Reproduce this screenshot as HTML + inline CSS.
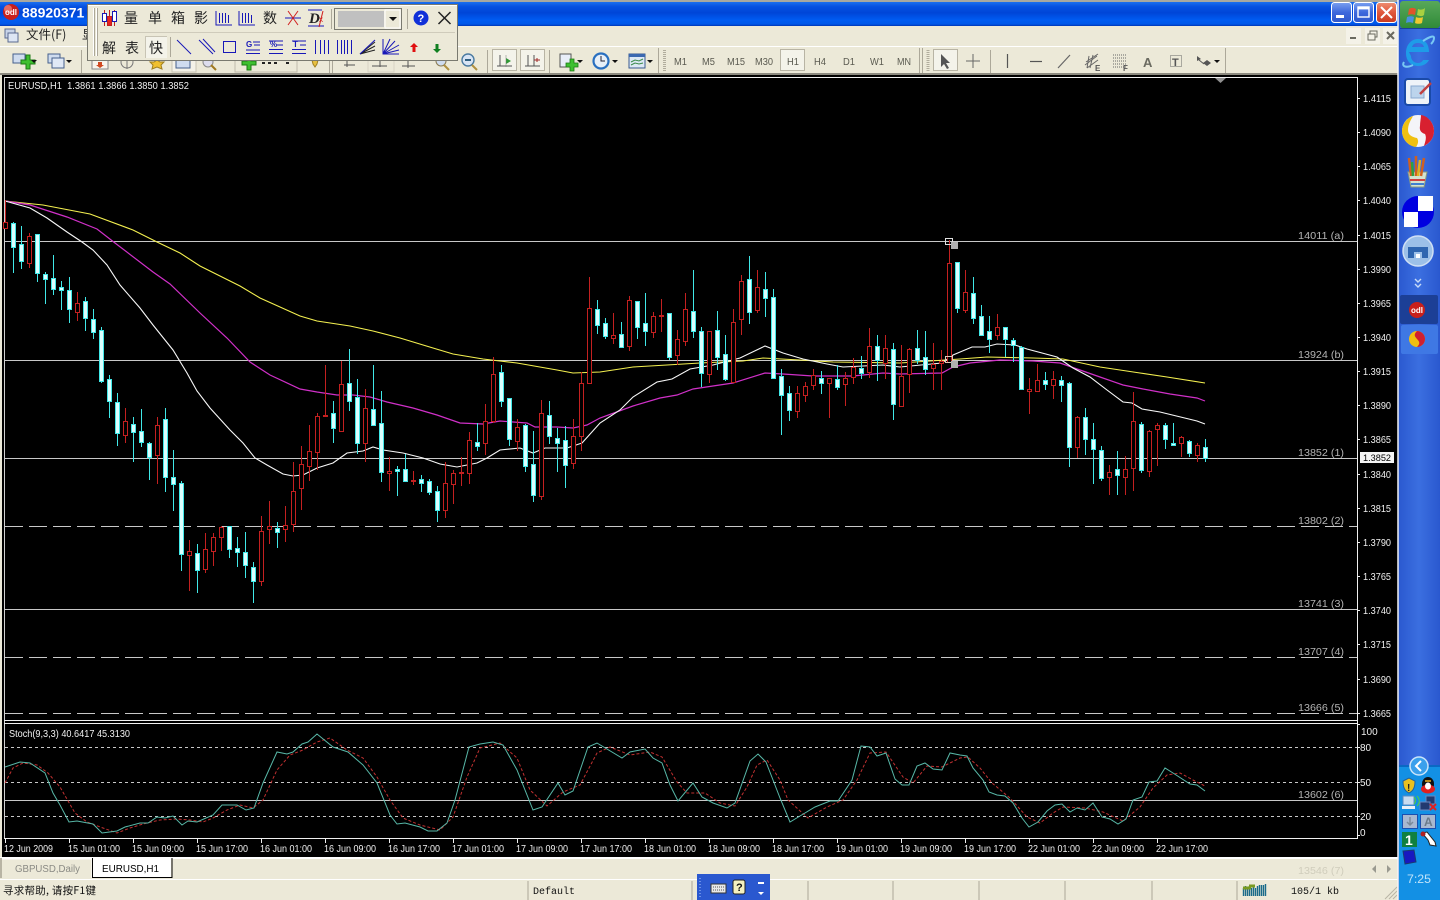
<!DOCTYPE html>
<html><head><meta charset="utf-8"><title>MT4</title>
<style>
html,body{margin:0;padding:0;background:#000;width:1440px;height:900px;overflow:hidden}
svg{display:block;position:absolute;left:0;top:0}
text{font-family:"Liberation Sans","WenQuanYi Zen Hei","Noto Sans CJK SC",sans-serif;font-size:10px}
.ax{fill:#f0f0f0}
.lb{fill:#b4b4b4}
.tb{fill:#5a5a50}
.cj{font-size:14px;fill:#222;font-family:"Noto Sans CJK SC","WenQuanYi Zen Hei",sans-serif}
.mono{font-family:"Liberation Mono",monospace;fill:#111}
</style></head><body>
<svg width="1440" height="900" viewBox="0 0 1440 900" xmlns="http://www.w3.org/2000/svg">
<defs>
<linearGradient id="tg" x1="0" y1="0" x2="0" y2="1"><stop offset="0" stop-color="#1b6fee"/><stop offset=".2" stop-color="#0650e0"/><stop offset=".45" stop-color="#0046d8"/><stop offset=".75" stop-color="#005cf2"/><stop offset=".92" stop-color="#0058e8"/><stop offset="1" stop-color="#0034b4"/></linearGradient>
<linearGradient id="bb" x1="0" y1="0" x2="0" y2="1"><stop offset="0" stop-color="#7aa0f0"/><stop offset=".5" stop-color="#3d68dc"/><stop offset="1" stop-color="#2f58cc"/></linearGradient>
<linearGradient id="rb" x1="0" y1="0" x2="0" y2="1"><stop offset="0" stop-color="#ee8e72"/><stop offset=".5" stop-color="#e0583c"/><stop offset="1" stop-color="#c83a20"/></linearGradient>
<linearGradient id="sb" x1="0" y1="0" x2="1" y2="0"><stop offset="0" stop-color="#2a58cf"/><stop offset=".5" stop-color="#3b6fe0"/><stop offset="1" stop-color="#2a58cf"/></linearGradient>
<linearGradient id="st" x1="0" y1="0" x2="0" y2="1"><stop offset="0" stop-color="#58a85a"/><stop offset="1" stop-color="#308a38"/></linearGradient>
</defs>

<!-- base -->
<rect width="1440" height="900" fill="#ece9d8"/>
<rect x="0" y="0" width="1398" height="2" fill="#a8a8a0"/>
<rect x="0" y="2" width="1398" height="24" fill="url(#tg)"/>
<rect x="0" y="46" width="1398" height="1" fill="#fff"/>
<rect x="0" y="73" width="1398" height="2" fill="#8c8a80"/>

<!-- title bar -->
<circle cx="11" cy="12" r="8" fill="#c8201c"/><circle cx="8" cy="9" r="4" fill="#e86a60"/>
<text x="5" y="15" style="font-size:8px;font-weight:bold;fill:#fff">odl</text>
<text x="22" y="17.5" style="font-size:14px;font-weight:bold;fill:#fff">88920371</text>

<rect x="1331.5" y="2.5" width="20" height="20" rx="3" fill="url(#bb)" stroke="#fff"/>
<rect x="1336" y="15" width="8" height="3" fill="#fff"/>
<rect x="1353.5" y="2.5" width="20" height="20" rx="3" fill="url(#bb)" stroke="#fff"/>
<rect x="1358" y="7" width="11" height="10" fill="none" stroke="#fff" stroke-width="1.4"/><rect x="1358" y="7" width="11" height="2.4" fill="#fff"/>
<rect x="1376.5" y="2.5" width="20" height="20" rx="3" fill="url(#rb)" stroke="#fff"/>
<path d="M1381 7l11 11M1392 7l-11 11" stroke="#fff" stroke-width="2"/>

<!-- menu bar -->
<rect x="5" y="29" width="10" height="9" fill="#c8d4e8" stroke="#5a6a90"/><rect x="8" y="33" width="10" height="9" fill="#dde6f4" stroke="#5a6a90"/>
<text x="26" y="39" style="font-size:12.500px;fill:#222;font-family:'Noto Sans CJK SC',sans-serif">文件(F)</text>
<text x="82" y="39" style="font-size:12.500px;fill:#222;font-family:'Noto Sans CJK SC',sans-serif">显</text>
<rect x="1346" y="28" width="15" height="16" fill="#f4f2e8"/><rect x="1350" y="37" width="6" height="2" fill="#6a6a60"/>
<rect x="1365" y="28" width="15" height="16" fill="#f4f2e8"/><rect x="1370" y="31" width="7" height="6" fill="none" stroke="#6a6a60"/><rect x="1368" y="34" width="7" height="6" fill="#f4f2e8" stroke="#6a6a60"/>
<rect x="1383" y="28" width="14" height="16" fill="#f4f2e8"/><path d="M1387 32l7 7M1394 32l-7 7" stroke="#6a6a60" stroke-width="2"/>

<!-- toolbar left -->
<rect x="13" y="54" width="12" height="9" fill="#cfdcef" stroke="#46608c"/>
<path d="M21 60h5v-5h4v5h5v4h-5v5h-4v-5h-5z" fill="#3ec030" stroke="#1c7a14"/>
<path d="M31 60h6l-3 3z" fill="#111"/>
<rect x="48" y="54" width="12" height="9" fill="#cfdcef" stroke="#46608c"/><rect x="52" y="58" width="12" height="10" fill="#dfe8f6" stroke="#46608c"/>
<path d="M66 60h6l-3 3z" fill="#111"/>
<rect x="81" y="50" width="1" height="23" fill="#aca899"/>
<rect x="92" y="60" width="16" height="9" fill="#f8f4ec" stroke="#888"/><path d="M98 62h4v3h2l-4 3-4-3h2z" fill="#d04820"/>
<circle cx="127" cy="62" r="6" fill="none" stroke="#777"/><path d="M127 60v9" stroke="#777"/>
<path d="M157 60l3 2h4l-3 3 1 4-5-2-5 2 1-4-3-3h4z" fill="#f0c030" stroke="#a08020"/>
<rect x="172" y="60" width="24" height="12" fill="#f4f2e8" stroke="#c8c4b4"/><rect x="176" y="60" width="14" height="8" fill="#cfdcef" stroke="#46608c"/>
<circle cx="208" cy="62" r="5" fill="#dde" stroke="#888"/><path d="M211 65l5 5" stroke="#a07820" stroke-width="2"/>
<rect x="235" y="60" width="62" height="12" fill="#ece9d8" stroke="#c0bcac"/>
<path d="M242 61h5v-3h4v3h5v4h-5v5h-4v-5h-5z" fill="#3ec030" stroke="#1c7a14"/>
<rect x="262" y="62" width="3" height="2" fill="#222"/><rect x="268" y="62" width="3" height="2" fill="#222"/><rect x="274" y="62" width="3" height="2" fill="#222"/><rect x="286" y="62" width="3" height="2" fill="#222"/>
<path d="M312 60l6 0-1 4-2 3-2-3z" fill="#e8c040" stroke="#a08020"/>
<rect x="329" y="50" width="1" height="23" fill="#aca899"/><rect x="332" y="50" width="1" height="23" fill="#aca899"/>
<path d="M347 61v6M352 65h-8M355 65h-11" stroke="#555"/><path d="M380 59v8M372 66h15" stroke="#555"/><rect x="368" y="60" width="26" height="12" fill="none" stroke="#d8d4c4"/><path d="M408 60v8M402 66h13" stroke="#555"/>
<circle cx="441" cy="61" r="5" fill="#cfdcef" stroke="#8a7a50"/><path d="M444 65l5 5" stroke="#b09040" stroke-width="2"/>
<circle cx="468" cy="60" r="6" fill="#d8e4f4" stroke="#4a7aa0" stroke-width="1.4"/><rect x="465" y="59" width="6" height="2" fill="#306080"/><path d="M472 65l5 5" stroke="#b09040" stroke-width="2"/>
<rect x="487" y="50" width="1" height="23" fill="#aca899"/>

<!-- toolbar mid -->
<rect x="492.5" y="49.5" width="24" height="21" fill="#f4f3ea" stroke="#b8b4a4"/>
<path d="M500 55v11M497 66h15" stroke="#555"/><path d="M506 58l5 3-5 3z" fill="#2f9a34"/><path d="M506 55v12" stroke="#777" stroke-width=".5"/>
<rect x="520.5" y="49.5" width="24" height="21" fill="#f4f3ea" stroke="#b8b4a4"/>
<path d="M528 55v11M534 55v11M525 66h15" stroke="#555"/><path d="M534 60h6M537 58v4" stroke="#a02828"/>
<rect x="549" y="50" width="1" height="23" fill="#aca899"/>
<rect x="560" y="54" width="11" height="13" fill="#e8eef8" stroke="#555"/>
<path d="M566 63h4v-4h4v4h4v4h-4v4h-4v-4h-4z" fill="#3ec030" stroke="#1c7a14" stroke-width=".8"/>
<path d="M577 60h6l-3 3z" fill="#111"/>
<circle cx="601" cy="61" r="7.5" fill="#e8f0f8" stroke="#2a70c0" stroke-width="2.2"/><path d="M601 56v5h4" stroke="#223" fill="none"/>
<path d="M612 60h6l-3 3z" fill="#111"/>
<rect x="629" y="54" width="16" height="14" fill="#dce8f4" stroke="#3a5a90"/><rect x="629" y="54" width="16" height="3" fill="#3a68b0"/><path d="M631 62l4-2 4 1 4-2M631 65l4-2 4 1 4-1" stroke="#3a8a4a" fill="none"/>
<path d="M647 60h6l-3 3z" fill="#111"/>
<rect x="658" y="48" width="1" height="25" fill="#aca899"/>
<path d="M664.5 50v22" stroke="#b0ac9c" stroke-dasharray="1 1" stroke-width="3"/>
<text x="674" y="65" class="tb" textLength="13" lengthAdjust="spacingAndGlyphs">M1</text>
<text x="702" y="65" class="tb" textLength="13" lengthAdjust="spacingAndGlyphs">M5</text>
<text x="727" y="65" class="tb" textLength="18" lengthAdjust="spacingAndGlyphs">M15</text>
<text x="755" y="65" class="tb" textLength="18" lengthAdjust="spacingAndGlyphs">M30</text>
<rect x="780.5" y="49.5" width="24" height="21" fill="#f4f3ea" stroke="#b8b4a4"/>
<text x="787" y="65" class="tb" textLength="12" lengthAdjust="spacingAndGlyphs">H1</text>
<text x="814" y="65" class="tb" textLength="12" lengthAdjust="spacingAndGlyphs">H4</text>
<text x="843" y="65" class="tb" textLength="12" lengthAdjust="spacingAndGlyphs">D1</text>
<text x="870" y="65" class="tb" textLength="14" lengthAdjust="spacingAndGlyphs">W1</text>
<text x="897" y="65" class="tb" textLength="14" lengthAdjust="spacingAndGlyphs">MN</text>
<rect x="919" y="48" width="1" height="25" fill="#aca899"/><rect x="922" y="48" width="1" height="25" fill="#aca899"/>
<path d="M928 50v22" stroke="#b0ac9c" stroke-dasharray="1 1" stroke-width="3"/>
<rect x="933.5" y="49.5" width="24" height="21" fill="#f4f3ea" stroke="#b8b4a4"/>
<path d="M941 54l0 13 3-3 3 5 2-1-3-5h4z" fill="#555"/>
<path d="M973 54v14M966 61h14" stroke="#666"/>
<rect x="990" y="50" width="1" height="23" fill="#aca899"/>
<path d="M1007.500 54v14" stroke="#555" stroke-width="1.2"/>
<path d="M1030 61.500h12" stroke="#555" stroke-width="1.2"/>
<path d="M1058 68l12-13" stroke="#666" stroke-width="1.2"/>
<path d="M1085 65l12-9M1086 62l12-8M1087 68l11-8M1089 56l-2 12M1093 55l-3 13" stroke="#666"/><text x="1095" y="71" style="font-size:8px;font-weight:bold;fill:#555">E</text>
<path d="M1113 55h13M1113 58h13M1113 61h13M1113 64h13M1113 67h13" stroke="#666" stroke-dasharray="1 1"/><text x="1123" y="71" style="font-size:8px;font-weight:bold;fill:#555">F</text>
<text x="1143" y="67" style="font-size:13px;font-weight:bold;fill:#6a6a60">A</text>
<rect x="1170.500" y="55.500" width="11" height="11" fill="none" stroke="#666" stroke-dasharray="1 1"/><text x="1172" y="66" style="font-size:11px;font-weight:bold;fill:#555">T</text>
<path d="M1197 56l4 3-4 2zM1207 60l4 3-4 3-4-3z" fill="#555"/><path d="M1199 60l5 4" stroke="#555"/>
<path d="M1214 60h6l-3 3z" fill="#111"/>
<rect x="1225" y="48" width="1" height="25" fill="#aca899"/>

<!-- chart base -->
<rect x="2" y="75" width="1396" height="784" fill="#000"/>
<rect x="0" y="75" width="2" height="784" fill="#ece9d8"/>
<rect x="4" y="77" width="1354" height="1" fill="#f0f0f0"/>
<rect x="4" y="77" width="1" height="762" fill="#d0d0d0"/>
<rect x="1357" y="77" width="1" height="762" fill="#f0f0f0"/>
<rect x="4" y="720" width="1354" height="1" fill="#f0f0f0"/>
<rect x="4" y="723" width="1354" height="1" fill="#f0f0f0"/>
<rect x="4" y="838" width="1354" height="1" fill="#f0f0f0"/>
<path d="M1215 78h11l-5.500 5z" fill="#909090"/>
<path d="M1357 98.500h3M1357 132.500h3M1357 166.500h3M1357 200.500h3M1357 235.500h3M1357 269.500h3M1357 303.500h3M1357 337.500h3M1357 371.500h3M1357 405.500h3M1357 439.500h3M1357 474.500h3M1357 508.500h3M1357 542.500h3M1357 576.500h3M1357 610.500h3M1357 644.500h3M1357 679.500h3M1357 713.500h3M1357 724.500h3M1357 747.500h3M1357 782.500h3M1357 816.500h3M1357 835.500h3" stroke="#f0f0f0"/>
<path d="M5.500 839v4M69.500 839v4M133.500 839v4M197.500 839v4M261.500 839v4M325.500 839v4M389.500 839v4M453.500 839v4M517.500 839v4M581.500 839v4M645.500 839v4M709.500 839v4M773.500 839v4M837.500 839v4M901.500 839v4M965.500 839v4M1029.500 839v4M1093.500 839v4M1157.500 839v4" stroke="#f0f0f0"/>

<!-- fib horizontal lines -->
<g stroke="#c8c8c8" shape-rendering="crispEdges">
<path d="M5 241.500H1357M5 360.500H1357M5 458.500H1357M5 609.500H1357M5 800.500H1357"/>
<path d="M5 526.500H1357M5 657.500H1357M5 713.500H1357" stroke-dasharray="18 6"/>
</g>
<path d="M5 747.500H1357M5 782.500H1357M5 816.500H1357" stroke="#c8c8c8" stroke-dasharray="3 3" shape-rendering="crispEdges"/>

<!-- MA lines -->
<polyline fill="none" stroke="#f4f050" stroke-width="1.1" points="5,201 43,205 90,214 133,230 157,242 180,253 200,266 240,286 260,298 300,316 317,321 350,326 373,331 400,338 433,348 453,354 483,359 517,363 557,370 573,373 600,372 633,367 667,365 700,363 743,361 763,358 800,360 833,362 900,363 960,359 987,357 1033,358 1063,359 1100,367 1140,373 1167,377 1205,383"/>
<polyline fill="none" stroke="#d030c8" stroke-width="1.2" points="5,201 30,205 67,217 97,229 115,243 153,272 170,284 200,313 227,338 250,362 270,375 300,389 317,392 337,395 353,395 370,397 387,402 413,408 437,415 460,423 483,424 500,421 527,423 535,427 557,427 573,428 587,425 600,418 633,406 660,398 677,395 693,389 733,383 765,373 783,374 813,376 853,376 883,373 900,374 942,373 953,367 970,363 1000,360 1033,361 1060,363 1080,370 1100,377 1123,385 1143,389 1170,394 1197,398 1205,401"/>
<polyline fill="none" stroke="#f8f8f8" stroke-width="1.1" points="5,201 30,208 47,218 67,232 82,242 93,250 107,265 120,285 140,308 153,325 173,350 187,373 197,391 210,408 230,430 243,443 255,458 267,465 283,474 293,476 303,475 317,468 333,463 347,453 363,451 373,447 383,450 403,453 423,458 440,464 457,467 477,463 487,458 500,450 520,448 533,453 545,448 567,448 582,443 600,423 620,410 633,397 657,382 672,379 690,369 713,365 740,358 765,346 783,353 803,359 827,364 843,367 883,365 900,367 942,363 953,355 972,347 985,347 997,344 1015,345 1027,349 1057,357 1073,368 1090,377 1107,390 1123,402 1132,403 1142,409 1160,412 1197,421 1205,424"/>

<!-- wicks -->
<path shape-rendering="crispEdges" stroke="#c42020" fill="none" d="M5.500 200V228M29.500 233V268M77.500 292V321M125.500 408V443M157.500 417V484M189.500 540V591M205.500 533V573M213.500 533V566M221.500 526V551M261.500 516V586M269.500 501V544M285.500 506V542M293.500 462V532M301.500 446V510M309.500 425V481M317.500 413V470M325.500 365V417M341.500 361V431M365.500 389V462M389.500 457V491M413.500 471V485M445.500 462V518M453.500 470V504M461.500 457V486M469.500 432V484M485.500 404V455M493.500 357V423M517.500 419V451M541.500 400V500M573.500 419V469M581.500 372V451M589.500 277V384M613.500 313V344M629.500 296V351M653.500 312V338M661.500 299V332M677.500 330V365M685.500 293V346M709.500 331V383M733.500 309V383M741.500 275V335M757.500 270V313M797.500 386V418M805.500 382V402M813.500 369V390M829.500 378V418M845.500 372V406M853.500 358V384M869.500 328V378M885.500 335V379M901.500 345V407M909.500 348V393M933.500 343V390M941.500 350V390M949.500 240V362M965.500 270V313M997.500 314V340M1029.500 378V414M1037.500 364V392M1053.500 371V399M1077.500 416V458M1109.500 465V495M1125.500 456V495M1133.500 392V491M1149.500 430V477M1157.500 423V466M1181.500 436V457M1197.500 443V462"/>
<path shape-rendering="crispEdges" stroke="#40e8e8" fill="none" d="M13.500 222V273M21.500 226V269M37.500 234V282M45.500 272V304M53.500 255V295M61.500 281V310M69.500 277V323M85.500 297V331M93.500 309V339M101.500 327V383M109.500 375V418M117.500 393V446M133.500 417V462M141.500 409V447M149.500 442V480M165.500 408V492M173.500 450V511M181.500 481V571M197.500 544V593M229.500 526V558M237.500 537V567M245.500 532V578M253.500 562V603M277.500 522V548M333.500 401V443M349.500 349V411M357.500 379V454M373.500 365V426M381.500 391V482M397.500 466V496M405.500 454V482M421.500 475V492M429.500 479V495M437.500 486V522M477.500 423V451M501.500 365V407M509.500 398V446M525.500 424V472M533.500 431V502M549.500 401V444M557.500 428V472M565.500 426V488M597.500 300V334M605.500 318V339M621.500 322V348M637.500 301V339M645.500 293V346M669.500 313V360M693.500 270V338M701.500 327V387M717.500 311V370M725.500 335V381M749.500 256V324M765.500 272V317M773.500 289V378M781.500 369V435M789.500 386V421M821.500 371V394M837.500 365V390M861.500 356V379M877.500 335V381M893.500 343V420M917.500 330V364M925.500 331V375M957.500 262V313M973.500 277V324M981.500 305V335M989.500 316V353M1005.500 327V357M1013.500 338V362M1021.500 346V390M1045.500 372V390M1061.500 376V402M1069.500 382V467M1085.500 408V455M1093.500 423V484M1101.500 446V481M1117.500 451V495M1141.500 422V473M1165.500 423V449M1173.500 423V445M1189.500 440V457M1205.500 439V462"/>

<!-- bodies red -->
<path shape-rendering="crispEdges" stroke="#c42020" fill="#000" d="M3.500 222.500h4v6h-4zM27.500 236.500h4v27h-4zM75.500 303.500h4v9h-4zM123.500 421.500h4v14h-4zM155.500 425.500h4v30h-4zM187.500 551.500h4v4h-4zM203.500 549.500h4v20h-4zM211.500 537.500h4v14h-4zM219.500 527.500h4v10h-4zM259.500 531.500h4v50h-4zM267.500 526.500h4v3h-4zM283.500 525.500h4v4h-4zM291.500 491.500h4v33h-4zM299.500 464.500h4v24h-4zM307.500 451.500h4v15h-4zM315.500 416.500h4v36h-4zM323.500 415.500h4v1h-4zM339.500 384.500h4v47h-4zM363.500 408.500h4v35h-4zM387.500 471.500h4v2h-4zM411.500 480.500h4v1h-4zM443.500 483.500h4v27h-4zM451.500 473.500h4v11h-4zM459.500 472.500h4v1h-4zM467.500 440.500h4v33h-4zM483.500 421.500h4v22h-4zM491.500 374.500h4v47h-4zM515.500 427.500h4v14h-4zM539.500 413.500h4v83h-4zM571.500 436.500h4v27h-4zM579.500 383.500h4v53h-4zM587.500 308.500h4v75h-4zM611.500 335.500h4v3h-4zM627.500 300.500h4v46h-4zM651.500 316.500h4v16h-4zM659.500 315.500h4v1h-4zM675.500 339.500h4v16h-4zM683.500 309.500h4v32h-4zM707.500 331.500h4v43h-4zM731.500 322.500h4v60h-4zM739.500 281.500h4v38h-4zM755.500 287.500h4v23h-4zM795.500 393.500h4v18h-4zM803.500 386.500h4v9h-4zM811.500 375.500h4v10h-4zM827.500 378.500h4v5h-4zM843.500 378.500h4v6h-4zM851.500 367.500h4v10h-4zM867.500 346.500h4v26h-4zM883.500 348.500h4v15h-4zM899.500 376.500h4v30h-4zM907.500 349.500h4v25h-4zM931.500 364.500h4v4h-4zM939.500 361.500h4v2h-4zM947.500 263.500h4v99h-4zM963.500 292.500h4v18h-4zM995.500 327.500h4v8h-4zM1027.500 389.500h4v2h-4zM1035.500 380.500h4v11h-4zM1051.500 379.500h4v6h-4zM1075.500 417.500h4v30h-4zM1107.500 472.500h4v5h-4zM1123.500 469.500h4v8h-4zM1131.500 421.500h4v47h-4zM1147.500 431.500h4v40h-4zM1155.500 425.500h4v4h-4zM1179.500 437.500h4v6h-4zM1195.500 445.500h4v10h-4z"/>
<!-- bodies cyan -->
<path shape-rendering="crispEdges" stroke="#40e8e8" fill="#dcffff" d="M11.500 223.500h4v24h-4zM19.500 244.500h4v17h-4zM35.500 234.500h4v39h-4zM43.500 274.500h4v5h-4zM51.500 278.500h4v11h-4zM59.500 287.500h4v3h-4zM67.500 290.500h4v19h-4zM83.500 301.500h4v17h-4zM91.500 319.500h4v13h-4zM99.500 330.500h4v51h-4zM107.500 379.500h4v22h-4zM115.500 402.500h4v31h-4zM131.500 424.500h4v8h-4zM139.500 431.500h4v11h-4zM147.500 443.500h4v14h-4zM163.500 419.500h4v58h-4zM171.500 477.500h4v7h-4zM179.500 483.500h4v71h-4zM195.500 553.500h4v17h-4zM227.500 526.500h4v23h-4zM235.500 548.500h4v4h-4zM243.500 552.500h4v13h-4zM251.500 567.500h4v14h-4zM275.500 528.500h4v4h-4zM331.500 413.500h4v15h-4zM347.500 383.500h4v18h-4zM355.500 397.500h4v46h-4zM371.500 409.500h4v16h-4zM379.500 423.500h4v49h-4zM395.500 469.500h4v2h-4zM403.500 469.500h4v12h-4zM419.500 479.500h4v4h-4zM427.500 481.500h4v11h-4zM435.500 491.500h4v19h-4zM475.500 442.500h4v4h-4zM499.500 372.500h4v29h-4zM507.500 398.500h4v41h-4zM523.500 425.500h4v41h-4zM531.500 464.500h4v31h-4zM547.500 415.500h4v21h-4zM555.500 438.500h4v5h-4zM563.500 440.500h4v25h-4zM595.500 309.500h4v16h-4zM603.500 323.500h4v13h-4zM619.500 334.500h4v13h-4zM635.500 301.500h4v26h-4zM643.500 323.500h4v8h-4zM667.500 313.500h4v44h-4zM691.500 311.500h4v20h-4zM699.500 331.500h4v42h-4zM715.500 330.500h4v27h-4zM723.500 354.500h4v25h-4zM747.500 279.500h4v33h-4zM763.500 289.500h4v9h-4zM771.500 297.500h4v81h-4zM779.500 376.500h4v19h-4zM787.500 393.500h4v17h-4zM819.500 378.500h4v5h-4zM835.500 379.500h4v8h-4zM859.500 368.500h4v5h-4zM875.500 346.500h4v14h-4zM891.500 349.500h4v55h-4zM915.500 348.500h4v12h-4zM923.500 357.500h4v12h-4zM955.500 262.500h4v46h-4zM971.500 293.500h4v25h-4zM979.500 316.500h4v19h-4zM987.500 331.500h4v8h-4zM1003.500 327.500h4v12h-4zM1011.500 340.500h4v5h-4zM1019.500 347.500h4v42h-4zM1043.500 380.500h4v4h-4zM1059.500 380.500h4v5h-4zM1067.500 383.500h4v64h-4zM1083.500 417.500h4v22h-4zM1091.500 439.500h4v10h-4zM1099.500 450.500h4v28h-4zM1115.500 469.500h4v6h-4zM1139.500 424.500h4v46h-4zM1163.500 425.500h4v14h-4zM1171.500 443.500h4v2h-4zM1187.500 441.500h4v12h-4zM1203.500 447.500h4v11h-4z"/>

<!-- fib anchors -->
<rect x="945.500" y="238.500" width="7" height="6" fill="none" stroke="#e0e0e0"/>
<rect x="951" y="242" width="7" height="7" fill="#b0b0b0"/>
<rect x="945.500" y="356.500" width="7" height="6" fill="none" stroke="#e0c8b8"/>
<rect x="951" y="361" width="7" height="7" fill="#b0b0b0"/>

<!-- stochastic -->
<polyline fill="none" stroke="#c03030" stroke-dasharray="3 2" points="5,783 13,768 23,763 37,765 48,773 60,787 75,813 87,822 103,828 117,833 130,828 143,824 160,820 177,819 190,820 203,822 213,818 227,810 240,805 253,808 263,800 277,770 290,755 303,750 317,742 330,738 347,750 363,758 377,777 390,800 403,818 420,825 440,830 453,817 467,777 480,748 500,743 517,758 530,790 547,806 563,792 580,785 597,753 610,747 630,755 650,752 662,757 677,782 687,793 705,793 720,803 735,806 747,787 757,765 767,760 780,780 788,800 808,818 827,807 843,800 857,780 870,753 886,752 903,777 913,783 927,766 942,767 960,758 968,757 980,768 992,783 1010,798 1027,817 1040,823 1053,813 1063,807 1085,808 1103,812 1123,821 1140,807 1153,788 1167,775 1180,773 1193,780 1205,786"/>
<polyline fill="none" stroke="#58b8a8" stroke-width="1" points="5,767 20,762 30,763 45,773 53,793 60,805 69,822 77,821 93,824 102,833 117,831 125,827 140,823 148,823 157,817 165,818 173,816 182,825 188,821 197,822 213,815 222,805 237,805 246,810 254,808 263,783 277,752 287,754 293,752 302,744 308,742 317,734 333,747 348,752 363,765 377,783 390,815 397,824 405,823 420,827 428,831 437,831 447,823 455,800 469,747 480,744 493,742 503,745 517,770 533,810 542,807 558,783 565,795 573,791 588,747 597,743 622,758 630,752 645,749 653,758 662,763 670,785 678,801 693,783 702,797 713,803 727,808 735,803 750,761 758,754 766,762 780,798 790,822 800,816 815,807 830,801 838,801 852,780 861,746 870,747 877,756 886,753 895,779 902,785 909,785 917,766 925,763 933,769 942,770 950,753 960,755 967,756 973,768 983,780 989,792 997,795 1005,796 1013,803 1022,818 1029,827 1038,822 1047,811 1055,805 1062,804 1070,812 1077,808 1085,810 1093,803 1102,817 1110,819 1118,824 1126,819 1133,800 1142,797 1149,782 1157,781 1165,768 1173,773 1190,784 1197,785 1205,791"/>

<!-- chart text -->
<text x="8" y="89" class="ax" textLength="181" lengthAdjust="spacingAndGlyphs" xml:space="preserve">EURUSD,H1  1.3861 1.3866 1.3850 1.3852</text>
<text x="9" y="737" class="ax" textLength="121" lengthAdjust="spacingAndGlyphs">Stoch(9,3,3) 40.6417 45.3130</text>

<text class="ax" x="1363" y="102" textLength="28" lengthAdjust="spacingAndGlyphs">1.4115</text>
<text class="ax" x="1363" y="136" textLength="28" lengthAdjust="spacingAndGlyphs">1.4090</text>
<text class="ax" x="1363" y="170" textLength="28" lengthAdjust="spacingAndGlyphs">1.4065</text>
<text class="ax" x="1363" y="204" textLength="28" lengthAdjust="spacingAndGlyphs">1.4040</text>
<text class="ax" x="1363" y="239" textLength="28" lengthAdjust="spacingAndGlyphs">1.4015</text>
<text class="ax" x="1363" y="273" textLength="28" lengthAdjust="spacingAndGlyphs">1.3990</text>
<text class="ax" x="1363" y="307" textLength="28" lengthAdjust="spacingAndGlyphs">1.3965</text>
<text class="ax" x="1363" y="341" textLength="28" lengthAdjust="spacingAndGlyphs">1.3940</text>
<text class="ax" x="1363" y="375" textLength="28" lengthAdjust="spacingAndGlyphs">1.3915</text>
<text class="ax" x="1363" y="409" textLength="28" lengthAdjust="spacingAndGlyphs">1.3890</text>
<text class="ax" x="1363" y="443" textLength="28" lengthAdjust="spacingAndGlyphs">1.3865</text>
<text class="ax" x="1363" y="478" textLength="28" lengthAdjust="spacingAndGlyphs">1.3840</text>
<text class="ax" x="1363" y="512" textLength="28" lengthAdjust="spacingAndGlyphs">1.3815</text>
<text class="ax" x="1363" y="546" textLength="28" lengthAdjust="spacingAndGlyphs">1.3790</text>
<text class="ax" x="1363" y="580" textLength="28" lengthAdjust="spacingAndGlyphs">1.3765</text>
<text class="ax" x="1363" y="614" textLength="28" lengthAdjust="spacingAndGlyphs">1.3740</text>
<text class="ax" x="1363" y="648" textLength="28" lengthAdjust="spacingAndGlyphs">1.3715</text>
<text class="ax" x="1363" y="683" textLength="28" lengthAdjust="spacingAndGlyphs">1.3690</text>
<text class="ax" x="1363" y="717" textLength="28" lengthAdjust="spacingAndGlyphs">1.3665</text>
<text class="ax" x="1361" y="735">100</text>
<text class="ax" x="1360" y="751">80</text>
<text class="ax" x="1360" y="786">50</text>
<text class="ax" x="1360" y="820">20</text>
<text class="ax" x="1360" y="836">0</text>
<rect x="1360" y="452" width="34" height="11" fill="#f4f4f4"/>
<text x="1363" y="461" style="fill:#000;font-size:9.5px" textLength="28" lengthAdjust="spacingAndGlyphs">1.3852</text>

<text class="lb" x="1298" y="239" textLength="46" lengthAdjust="spacingAndGlyphs">14011 (a)</text>
<text class="lb" x="1298" y="358" textLength="46" lengthAdjust="spacingAndGlyphs">13924 (b)</text>
<text class="lb" x="1298" y="456" textLength="46" lengthAdjust="spacingAndGlyphs">13852 (1)</text>
<text class="lb" x="1298" y="524" textLength="46" lengthAdjust="spacingAndGlyphs">13802 (2)</text>
<text class="lb" x="1298" y="607" textLength="46" lengthAdjust="spacingAndGlyphs">13741 (3)</text>
<text class="lb" x="1298" y="655" textLength="46" lengthAdjust="spacingAndGlyphs">13707 (4)</text>
<text class="lb" x="1298" y="711" textLength="46" lengthAdjust="spacingAndGlyphs">13666 (5)</text>
<text class="lb" x="1298" y="798" textLength="46" lengthAdjust="spacingAndGlyphs">13602 (6)</text>

<text class="ax" x="4" y="852" textLength="49" lengthAdjust="spacingAndGlyphs">12 Jun 2009</text>
<text class="ax" x="68" y="852" textLength="52" lengthAdjust="spacingAndGlyphs">15 Jun 01:00</text>
<text class="ax" x="132" y="852" textLength="52" lengthAdjust="spacingAndGlyphs">15 Jun 09:00</text>
<text class="ax" x="196" y="852" textLength="52" lengthAdjust="spacingAndGlyphs">15 Jun 17:00</text>
<text class="ax" x="260" y="852" textLength="52" lengthAdjust="spacingAndGlyphs">16 Jun 01:00</text>
<text class="ax" x="324" y="852" textLength="52" lengthAdjust="spacingAndGlyphs">16 Jun 09:00</text>
<text class="ax" x="388" y="852" textLength="52" lengthAdjust="spacingAndGlyphs">16 Jun 17:00</text>
<text class="ax" x="452" y="852" textLength="52" lengthAdjust="spacingAndGlyphs">17 Jun 01:00</text>
<text class="ax" x="516" y="852" textLength="52" lengthAdjust="spacingAndGlyphs">17 Jun 09:00</text>
<text class="ax" x="580" y="852" textLength="52" lengthAdjust="spacingAndGlyphs">17 Jun 17:00</text>
<text class="ax" x="644" y="852" textLength="52" lengthAdjust="spacingAndGlyphs">18 Jun 01:00</text>
<text class="ax" x="708" y="852" textLength="52" lengthAdjust="spacingAndGlyphs">18 Jun 09:00</text>
<text class="ax" x="772" y="852" textLength="52" lengthAdjust="spacingAndGlyphs">18 Jun 17:00</text>
<text class="ax" x="836" y="852" textLength="52" lengthAdjust="spacingAndGlyphs">19 Jun 01:00</text>
<text class="ax" x="900" y="852" textLength="52" lengthAdjust="spacingAndGlyphs">19 Jun 09:00</text>
<text class="ax" x="964" y="852" textLength="52" lengthAdjust="spacingAndGlyphs">19 Jun 17:00</text>
<text class="ax" x="1028" y="852" textLength="52" lengthAdjust="spacingAndGlyphs">22 Jun 01:00</text>
<text class="ax" x="1092" y="852" textLength="52" lengthAdjust="spacingAndGlyphs">22 Jun 09:00</text>
<text class="ax" x="1156" y="852" textLength="52" lengthAdjust="spacingAndGlyphs">22 Jun 17:00</text>

<!-- tab bar -->
<rect x="0" y="857" width="1398" height="2" fill="#fff"/>
<rect x="0" y="859" width="1398" height="21" fill="#ece9d8"/>
<rect x="0" y="858" width="2" height="20" fill="#b8b4a4"/>
<path d="M2 859h90v19" fill="none" stroke="#fff"/>
<text x="15" y="872" style="fill:#8a8a84" textLength="65" lengthAdjust="spacingAndGlyphs">GBPUSD,Daily</text>
<rect x="93" y="858" width="78" height="19" fill="#fff"/>
<path d="M92.500 858v19.500h79.500V858" fill="none" stroke="#000"/>
<text x="102" y="872" style="fill:#000" textLength="57" lengthAdjust="spacingAndGlyphs">EURUSD,H1</text>
<text x="1298" y="874" style="fill:#d0cdbc" textLength="46" lengthAdjust="spacingAndGlyphs">13546 (7)</text>
<path d="M1376 865v8l-4-4zM1387 865v8l4-4z" fill="#9a9a90"/>

<!-- status bar -->
<rect x="0" y="879" width="1398" height="1" fill="#fff"/>
<text x="3" y="894" style="font-size:10.500px;fill:#111;font-family:'WenQuanYi Zen Hei','Noto Sans CJK SC',sans-serif" textLength="93">寻求帮助, 请按F1键</text>
<path d="M528 881v19M692 881v19M808 881v19M893 881v19M979 881v19M1065 881v19M1152 881v19M1237 881v19" stroke="#aca899"/>
<text x="533" y="894" class="mono" style="font-size:10px">Default</text>
<text x="1291" y="894" class="mono" style="font-size:10px">105/1 kb</text>
<path d="M1243.500 888v8M1245.500 886v10M1247.500 888v8M1249.500 886v10M1251.500 888v8M1253.500 886v10M1255.500 888v8M1257.500 886v10M1259.500 885v11M1261.500 885v11M1263.500 885v11M1265.500 884v12" stroke="#1a6a8a" stroke-width="1.4"/>
<path d="M1243 888h8M1249 886h6" stroke="#7a9a20" stroke-width="3"/>
<path d="M1385 899l12-12M1389 899l8-8M1393 899l4-4" stroke="#b8b4a4"/>

<!-- IME bar -->
<rect x="697" y="874" width="73" height="26" fill="#2a58cf"/>
<path d="M700 878v20" stroke="#6a90e8" stroke-width="2" stroke-dasharray="1 2"/>
<rect x="711" y="884" width="15" height="9" fill="#e8e8e8" stroke="#333"/><path d="M713 887h11M713 890h11" stroke="#555" stroke-dasharray="1 1"/>
<rect x="733" y="880" width="12" height="14" rx="2" fill="#f4f0c0" stroke="#222"/>
<text x="736" y="891" style="font-size:11px;font-weight:bold;fill:#111">?</text>
<rect x="758" y="882" width="6" height="2" fill="#fff"/><path d="M758 892h6l-3 3z" fill="#fff"/>

<!-- sidebar -->
<rect x="1398" y="0" width="42" height="900" fill="url(#sb)"/>
<rect x="1397" y="0" width="2" height="900" fill="#f4f4f4" opacity=".75"/>
<rect x="1400" y="1" width="40" height="27" rx="3" fill="url(#st)"/>
<path d="M1409 9c3-2 5-1 7 0l-1 6c-2-1-5-1-7 0z" fill="#e0542a"/><path d="M1418 9c2 1 5 1 7-1l-1 7c-2 2-5 1-7 0z" fill="#a8d040"/><path d="M1407 17c3-1 5-1 7 0l-1 6c-2-1-5-1-7 0z" fill="#4a90e0"/><path d="M1416 17c2 1 5 1 7 0l-1 6c-2 1-5 1-7 0z" fill="#f0c830"/>
<rect x="1400" y="28" width="40" height="1" fill="#1a3e9a"/>
<!-- IE -->
<path d="M1409 52h20c0-9-5-13-11-13s-12 5-12 14 6 13 12 13c5 0 9-2 11-6h-6c-1 2-3 3-5 3-4 0-7-3-7-7zM1412 47c1-3 3-4 6-4s5 1 6 4z" fill="#1e9ce8" fill-rule="evenodd"/>
<path d="M1404 62c-3 5 3 6 9 3M1423 41c6-4 11-6 11-3 0 2-1 4-3 6" fill="none" stroke="#78c8f4" stroke-width="2"/>
<!-- notepad -->
<rect x="1405" y="79" width="25" height="26" rx="3" fill="#eef3f8" stroke="#1a4aa8" stroke-width="2"/><rect x="1411" y="86" width="13" height="12" fill="#bcd4ec" stroke="#8aaad0"/><path d="M1420 94l11-11" stroke="#c04040" stroke-width="2.500"/>
<!-- ball -->
<circle cx="1418" cy="131" r="16" fill="#f4f4f8"/>
<path d="M1413 116c-6 2-11 8-11 15 0 8 6 15 14 16 2-3 3-6 1-9-5-1-9-3-9-8 0-6 3-10 5-14z" fill="#f0c010"/>
<path d="M1421 115c7 1 13 8 13 16 0 7-4 12-10 15 1-4 3-8 1-12-3-1-6-3-5-8 0-4 1-8 1-11z" fill="#d82030"/>
<!-- pencils -->
<path d="M1408 172h19l-3 15h-13z" fill="#d4e4d0" stroke="#8a9a80"/>
<path d="M1411 176l-2-18M1416 176l0-20M1421 176l3-18" stroke="#d06020" stroke-width="2.500"/><path d="M1413 176l-1-14" stroke="#30a040" stroke-width="2.500"/><path d="M1418 176l2-16" stroke="#e0b020" stroke-width="2.500"/><path d="M1410 180h15" stroke="#d04040" stroke-width="2"/><path d="M1411 184h13" stroke="#4080d0" stroke-width="2"/>
<!-- checker -->
<circle cx="1418" cy="212" r="16" fill="#0000e0"/><rect x="1418" y="196" width="15" height="15" fill="#fff"/><rect x="1404" y="212" width="14" height="15" fill="#fff"/>
<!-- circle -->
<circle cx="1418" cy="251" r="15" fill="#9cc0e8" stroke="#d0e0f4" stroke-width="1.500"/><path d="M1408 247h20v11h-6v-6h-8v6h-6z" fill="#2f66b0"/><rect x="1416" y="254" width="4" height="4" fill="#fff"/>
<path d="M1415 279l3 3 3-3M1415 284l3 3 3-3" stroke="#c8dcf8" fill="none" stroke-width="1.400"/>
<rect x="1400" y="295" width="38" height="29" rx="2" fill="#1c3f96"/>
<circle cx="1417" cy="310" r="8" fill="#c8201c"/><text x="1411" y="313" style="font-size:8px;font-weight:bold;fill:#fff">odl</text>
<rect x="1401" y="325" width="37" height="29" rx="2" fill="#3f78e4"/>
<circle cx="1417" cy="339" r="8" fill="#f0c010"/><path d="M1417 331a8 8 0 0 1 0 16c3-3 3-5 0-8s-3-5 0-8z" fill="#d02030"/>

<!-- tray -->
<rect x="1399" y="767" width="41" height="133" fill="#1390e4"/>
<rect x="1399" y="765" width="41" height="2" fill="#0a68c4"/>
<circle cx="1419" cy="766" r="9" fill="#3aa0ec" stroke="#c8e4fa" stroke-width="1.500"/><path d="M1421 761l-5 5 5 5" fill="none" stroke="#fff" stroke-width="2"/>
<path d="M1403 781l6-3 6 3c0 7-2 10-6 12-4-2-6-5-6-12z" fill="#e8c020" stroke="#2060a0"/><text x="1407" y="791" style="font-size:10px;font-weight:bold;fill:#222">!</text>
<ellipse cx="1428" cy="784" rx="6" ry="7" fill="#111"/><ellipse cx="1428" cy="789" rx="7" ry="4.500" fill="#e02020"/><ellipse cx="1428" cy="786" rx="3" ry="3.500" fill="#fff"/><path d="M1425 781h6" stroke="#f0b020" stroke-width="1.500"/>
<rect x="1403" y="796" width="11" height="9" fill="#c8dcf0" stroke="#5a8ac0"/><rect x="1402" y="806" width="13" height="3" fill="#e8f0f8"/><path d="M1414 797c2 2 2 5 0 7M1417 796c3 3 3 7 0 10" stroke="#50d040" fill="none"/>
<rect x="1426" y="796" width="9" height="8" fill="#223a70" stroke="#6a88c0"/><rect x="1420" y="802" width="10" height="8" fill="#223a70" stroke="#6a88c0"/><path d="M1430 804l6 6M1436 804l-6 6" stroke="#e02020" stroke-width="2"/>
<rect x="1402.500" y="814.500" width="15" height="14" fill="#a8b8d0" stroke="#1a50b0"/><path d="M1410 817v8M1407 822l3 3 3-3" stroke="#7a8a9a" fill="none" stroke-width="1.500"/>
<rect x="1420.500" y="814.500" width="15" height="14" fill="#a8b8d0" stroke="#1a50b0"/><text x="1424" y="826" style="font-size:12px;font-weight:bold;fill:#6a7a8a">A</text>
<rect x="1402" y="832" width="15" height="15" fill="#108040"/><text x="1405" y="845" style="font-size:14px;font-weight:bold;fill:#fff">1</text>
<path d="M1422 833l5-1 8 10 1 4-6-1-2-5z" fill="#fff" stroke="#222"/><circle cx="1423" cy="834" r="2.500" fill="#b02020"/>
<path d="M1403 851l11-1 2 12-11 2z" fill="#1818c0" stroke="#1a3a70"/>
<text x="1407" y="883" style="font-size:11.500px;fill:#c0e4fa" textLength="24" lengthAdjust="spacingAndGlyphs">7:25</text>

<!-- floating toolbar -->
<rect x="87.500" y="4.500" width="370" height="56" fill="#ece9d8" stroke="#7a7a70"/>
<rect x="88" y="5" width="369" height="1" fill="#fff"/>
<path d="M93.500 8v48M96.500 8v48" stroke="#fff"/><path d="M94.500 8v48M97.500 8v48" stroke="#aca899"/>
<path d="M100 32.500h355" stroke="#cfcbbb"/>
<!-- row1 -->
<path d="M104.500 10v16M109.500 10v16M114.500 10v16" stroke="#c02020"/>
<rect x="102.500" y="13.500" width="4" height="8" fill="#fff" stroke="#1818b8"/><rect x="107.500" y="16.500" width="4" height="9" fill="#e82020" stroke="#c02020"/><rect x="112.500" y="11.500" width="4" height="10" fill="#fff" stroke="#1818b8"/>
<text x="124" y="23" class="cj">量</text>
<text x="148" y="23" class="cj">单</text>
<text x="171" y="23" class="cj">箱</text>
<text x="194" y="23" class="cj">影</text>
<path d="M216 11v14h16M219.500 13v10M222.500 13v10M225.500 13v10M228.500 15v8" stroke="#1818b8" fill="none"/><path d="M219.500 13v10M225.500 13v10" stroke="#1818b8" stroke-dasharray="1 1"/>
<path d="M239 11v14h16M242.500 13v10M245.500 13v10M248.500 13v10M251.500 15v8" stroke="#1818b8" fill="none"/>
<text x="263" y="23" class="cj">数</text>
<path d="M285 18h16" stroke="#1818b8"/><path d="M288 11l10 14M298 11l-10 14" stroke="#d02020"/>
<text x="309" y="23" style="font-size:15px;font-weight:bold;font-style:italic;fill:#222;font-family:'Liberation Serif',serif">D</text>
<path d="M308 10h14M308 26h16" stroke="#1818b8"/><path d="M319 27l4-16" stroke="#d02020"/><text x="319" y="22" style="font-size:8px;fill:#d02020">x</text>
<rect x="331" y="9" width="1" height="20" fill="#aca899"/>
<rect x="334.500" y="8.500" width="67" height="21" fill="#ece9d8" stroke="#7a7a70"/>
<rect x="338" y="11" width="46" height="16" fill="#c0c0c0"/>
<rect x="385" y="10" width="15" height="18" fill="#ece9d8" stroke="#fff"/>
<path d="M389 17h8l-4 4z" fill="#111"/>
<rect x="407" y="9" width="1" height="20" fill="#aca899"/>
<circle cx="421" cy="18" r="7.500" fill="#1030d8"/><text x="417.500" y="22" style="font-size:11px;font-weight:bold;fill:#fff">?</text>
<path d="M438.500 12l12 12M450.500 12l-12 12" stroke="#222" stroke-width="1.500"/>
<!-- row2 -->
<text x="102" y="53" class="cj">解</text>
<text x="125" y="53" class="cj">表</text>
<rect x="145" y="36" width="22" height="22" fill="#f4f3ea"/><path d="M145.500 58V36.500H167" stroke="#c8c4b4" fill="none"/>
<text x="149" y="53" class="cj">快</text>
<rect x="170" y="37" width="1" height="20" fill="#aca899"/>
<path d="M177 40l14 14" stroke="#1818b8"/>
<path d="M199 40l14 14M203 39l12 13" stroke="#1818b8"/>
<rect x="223.500" y="41.500" width="12" height="11" fill="none" stroke="#1818b8"/>
<text x="246" y="47" style="font-size:8px;font-weight:bold;fill:#1818b8">G</text><path d="M246 50h14M246 53.500h14" stroke="#1818b8"/><path d="M253 42h7M254 45h6" stroke="#1818b8"/>
<text x="270" y="47" style="font-size:8px;font-weight:bold;fill:#1818b8">%</text><path d="M269 41h14M277 45h6M269 49.500h14M269 53.500h14" stroke="#1818b8"/>
<text x="293" y="47" style="font-size:8px;font-weight:bold;fill:#1818b8">T</text><path d="M292 41h14M300 45h6M292 49.500h14M292 53.500h14" stroke="#1818b8"/>
<path d="M315.500 40v14M320.500 40v14M324.500 40v14M328.500 40v14" stroke="#1818b8"/>
<path d="M337.500 40v14M341.500 40v14M344.500 40v14M347.500 40v14M351.500 40v14" stroke="#1818b8"/>
<path d="M360 54l15-12M360 54l15-8M360 54l15-4" stroke="#222"/><path d="M360 54l15-14" stroke="#1818b8"/>
<path d="M383 39v15h16" stroke="#1818b8" fill="none"/><path d="M383 54l7-15M383 54l12-13M383 54l16-9M383 54l16-4" stroke="#1818b8"/>
<path d="M414 43l4 4h-2.500v5h-3v-5H410z" fill="#e01010"/>
<path d="M437 53l4-4h-2.500v-5h-3v5H433z" fill="#108020"/>
</svg>
</body></html>
